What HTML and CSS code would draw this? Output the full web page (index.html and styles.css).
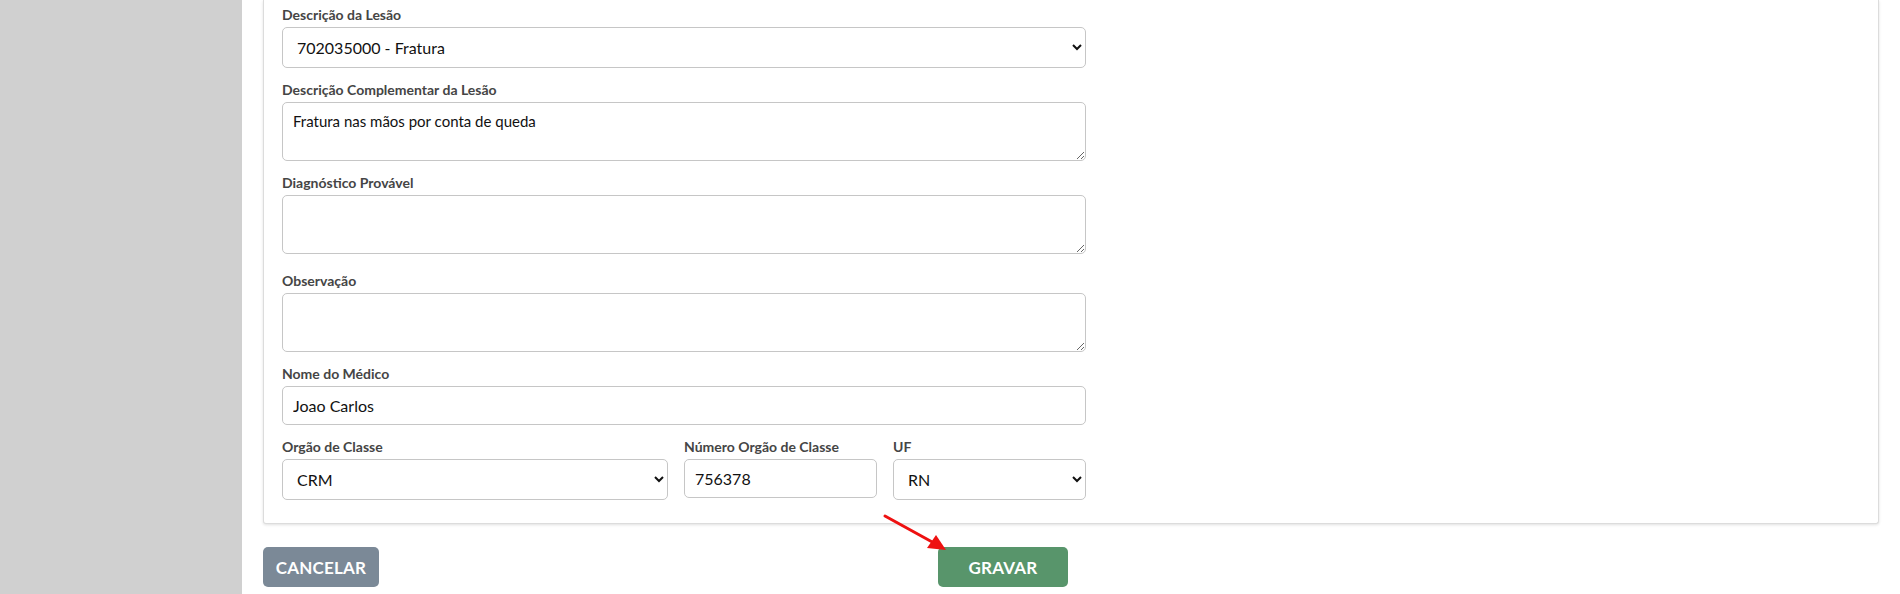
FILE: index.html
```html
<!DOCTYPE html>
<html lang="pt-BR">
<head>
<meta charset="utf-8">
<title>Formulário</title>
<link rel="stylesheet" href="styles.css">
</head>
<body>
<div class="layout">
  <aside class="sidebar"></aside>
  <main class="main">
    <section class="card">
      <div class="form">
        <div class="field">
          <label class="label">Descrição da Lesão</label>
          <select class="control select"><option>702035000 - Fratura</option></select>
        </div>
        <div class="field">
          <label class="label">Descrição Complementar da Lesão</label>
          <textarea class="control textarea">Fratura nas mãos por conta de queda</textarea>
        </div>
        <div class="field">
          <label class="label">Diagnóstico Provável</label>
          <textarea class="control textarea"></textarea>
        </div>
        <div class="field field-spaced">
          <label class="label">Observação</label>
          <textarea class="control textarea"></textarea>
        </div>
        <div class="field">
          <label class="label">Nome do Médico</label>
          <input class="control input" type="text" value="Joao Carlos">
        </div>
        <div class="field-row">
          <div class="field">
            <label class="label">Orgão de Classe</label>
            <select class="control select"><option>CRM</option></select>
          </div>
          <div class="field">
            <label class="label">Número Orgão de Classe</label>
            <input class="control input" type="text" value="756378">
          </div>
          <div class="field">
            <label class="label">UF</label>
            <select class="control select"><option>RN</option></select>
          </div>
        </div>
      </div>
    </section>
    <div class="actions">
      <button class="btn btn-cancel" type="button">CANCELAR</button>
      <button class="btn btn-save" type="button">GRAVAR</button>
    </div>
  </main>
</div>
<svg class="annotation-arrow" width="80" height="50" viewBox="0 0 80 50" aria-hidden="true">
  <line x1="3" y1="3" x2="52" y2="30" stroke="#ee1111" stroke-width="3" stroke-linecap="round"/>
  <polygon points="64,37 45,35 54,22" fill="#ee1111"/>
</svg>
</body>
</html>
```

FILE: styles.css
```css
* {
  box-sizing: border-box;
}

html, body {
  margin: 0;
  padding: 0;
  background: #ffffff;
  height: 594px;
  overflow: hidden;
}

body {
  font-family: "Lato", "Liberation Sans", sans-serif;
  color: #212529;
  position: relative;
}

.layout {
  display: flex;
  height: 594px;
}

.sidebar {
  width: 242px;
  flex: 0 0 242px;
  background: #d0d0d0;
}

.main {
  flex: 1;
  padding: 0 21px 0 21px;
}

.card {
  background: #ffffff;
  border: 1px solid #dcdcdc;
  border-top: none;
  border-radius: 0 0 3px 3px;
  box-shadow: 0 1px 3px rgba(0, 0, 0, 0.12);
  padding: 5px 18px 23px 18px;
}

.form {
  width: 804px;
}

.field {
  margin-bottom: 12px;
}

.field-spaced {
  margin-top: 17px;
}

.field-row {
  display: grid;
  grid-template-columns: 2fr 1fr 1fr;
  column-gap: 16px;
}

.field-row .field {
  margin-bottom: 0;
}

.label {
  display: block;
  font-size: 14px;
  line-height: 20px;
  font-weight: 700;
  color: #454545;
  margin-bottom: 2px;
}

.control {
  display: block;
  width: 100%;
  font-family: "Lato", "Liberation Sans", sans-serif;
  font-size: 16px;
  color: #111111;
  background: #ffffff;
  border: 1px solid #c6c6c6;
  border-radius: 5px;
  outline: none;
}

.select {
  height: 41px;
  padding: 0 8px 0 10px;
}

.input {
  height: 39px;
  padding: 0 10px;
}

.textarea {
  height: 59px;
  padding: 8px 10px;
  resize: vertical;
  font-size: 15px;
  line-height: 20px;
}

.actions {
  display: grid;
  grid-template-columns: 675px auto;
  align-items: start;
  padding-top: 23px;
}

.btn {
  height: 40px;
  border: none;
  border-radius: 5px;
  color: #ffffff;
  font-family: "Lato", "Liberation Sans", sans-serif;
  font-size: 17px;
  font-weight: 700;
  letter-spacing: 0.2px;
  cursor: pointer;
}

.btn-cancel {
  width: 116px;
  background: #7b8997;
}

.btn-save {
  width: 130px;
  background: #58956b;
}

.annotation-arrow {
  position: absolute;
  left: 882px;
  top: 513px;
  overflow: visible;
}
```
